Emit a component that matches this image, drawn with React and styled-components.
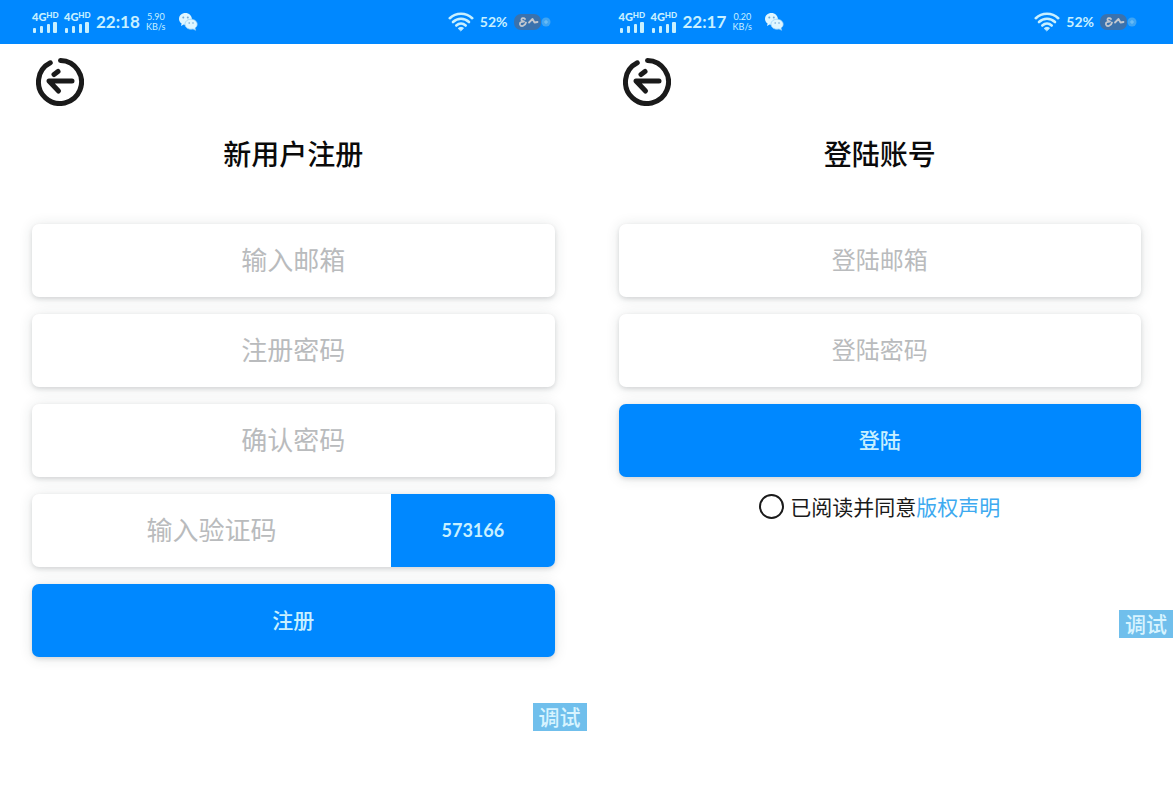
import React, { useState } from 'react'
import styled, { createGlobalStyle } from 'styled-components'

const colors = {
	blue: '#0088ff',
	ice: '#c8f0ff',
	ink: '#1a1a1a',
	placeholder: '#b9bbbd',
	link: '#3eaaf0',
	debug: '#70bfec',
	white: '#ffffff',
}

const cardShadow = '0 2px 4px rgba(30, 40, 50, 0.13), 0 1px 14px rgba(30, 50, 50, 0.12)'

const GlobalStyle = createGlobalStyle`
	* {
		box-sizing: border-box;
	}

	body {
		margin: 0;
		background: ${colors.white};
		color: ${colors.ink};
		font-family: Lato, 'Noto Sans CJK SC', sans-serif;
	}

	button,
	input {
		font-family: inherit;
	}
`

const Screens = styled.main`
	display: grid;
	grid-template-columns: 1fr 1fr;
	min-height: 100vh;
`

const Phone = styled.section`
	position: relative;
	min-width: 0;
`

const StatusBar = styled.header`
	display: flex;
	justify-content: space-between;
	align-items: center;
	height: 44px;
	padding: 0 36px 0 32px;
	background: ${colors.blue};
	color: ${colors.ice};
`

const StatusGroup = styled.div`
	display: flex;
	align-items: center;
	gap: 6px;
`

const Signal = styled.div`
	display: flex;
	flex-direction: column;
	gap: 1px;
	width: 26px;
`

const Network = styled.span`
	display: flex;
	font-size: 11px;
	font-weight: 900;
	line-height: 9px;
`

const Hd = styled.span`
	font-size: 8px;
	line-height: 7px;
`

const Time = styled.time`
	font-size: 17px;
	font-weight: 700;
	line-height: 22px;
`

const Speed = styled.span`
	width: 20px;
	margin-right: 6px;
	font-size: 9px;
	line-height: 10px;
	text-align: center;
`

const Percent = styled.span`
	font-size: 14px;
	font-weight: 700;
	line-height: 22px;
`

const Body = styled.div`
	padding: 14px 32px 0;
`

const BackButton = styled.button`
	display: block;
	margin-left: 4px;
	padding: 0;
	border: 0;
	background: none;
	cursor: pointer;

	svg {
		display: block;
	}
`

const Title = styled.h1`
	margin: 28px 0 50px;
	color: #0a0a0a;
	font-size: 28px;
	font-weight: 500;
	line-height: 40px;
	text-align: center;
`

const Form = styled.form`
	display: flex;
	flex-direction: column;
	gap: 17px;
`

const Field = styled.div`
	display: flex;
	height: 73px;
	overflow: hidden;
	border-radius: 7px;
	background: ${colors.white};
	box-shadow: ${cardShadow};
`

const Input = styled.input`
	flex: 11;
	min-width: 0;
	padding: 0 0 2px;
	border: 0;
	outline: 0;
	background: transparent;
	font-size: ${({ $compact }) => ($compact ? 24 : 26)}px;
	text-align: center;

	&::placeholder {
		color: ${colors.placeholder};
		opacity: 1;
	}
`

const CodeButton = styled.button`
	flex: 5;
	padding: 0 0 2px;
	border: 0;
	background: ${colors.blue};
	color: ${colors.ice};
	font-size: 18px;
	font-weight: 700;
`

const Submit = styled.button`
	height: 73px;
	padding: 0 0 4px;
	border: 0;
	border-radius: 7px;
	background: ${colors.blue};
	box-shadow: ${cardShadow};
	color: ${colors.ice};
	font-size: 21px;
	font-weight: 500;
`

const Agreement = styled.div`
	display: flex;
	justify-content: center;
	align-items: center;
	font-size: 21px;
	line-height: 24px;
`

const AgreeBox = styled.input`
	appearance: none;
	width: 25px;
	height: 25px;
	margin: 0 6px 0 0;
	border: 2px solid ${colors.ink};
	border-radius: 50%;

	&:checked {
		background: ${colors.blue};
	}
`

const Link = styled.a`
	color: ${colors.link};
	text-decoration: none;
`

const DebugTag = styled.button`
	position: absolute;
	top: ${({ $top }) => $top}px;
	right: 0;
	height: 28px;
	padding: 0 6px;
	border: 0;
	background: ${colors.debug};
	color: #d8f4ff;
	font-size: 21px;
	font-weight: 500;
	line-height: 28px;
`

const SignalMeter = () => (
	<Signal>
		<Network>
			4G<Hd>HD</Hd>
		</Network>
		<svg width='26' height='11' viewBox='0 0 26 11' fill='currentColor' aria-hidden='true'>
			<rect x='1' y='6' width='3' height='5' rx='1' />
			<rect x='8' y='4' width='3' height='7' rx='1' />
			<rect x='15' y='2' width='3' height='9' rx='1' />
			<rect x='21' y='0' width='4' height='11' rx='1' />
		</svg>
	</Signal>
)

const WeChatIcon = () => (
	<svg width='20' height='20' viewBox='0 0 20 20' aria-hidden='true'>
		<path d='M7.5 1C3.7 1 1 3.6 1 6.9c0 1.9 1 3.5 2.6 4.6L3 14l2.7-1.4c.8.2 1.7.2 2.6.1L14 7.4C13.8 3.7 11 1 7.5 1z' fill='#dff6ff' />
		<path d='M13 7.2c-3.4 0-6 2.2-6 5s2.6 5 6 5c.7 0 1.4-.1 2-.3l2.600 1.400-.6-2.200c1.400-1 2.200-2.300 2.200-3.900 0-2.800-2.800-5-6.200-5z' fill='#dff6ff' stroke='#8fcdf6' strokeWidth='.7' />
		<g fill='#6fa9d8'>
			<circle cx='5.3' cy='5.5' r='1' />
			<circle cx='9.8' cy='5.5' r='1' />
			<circle cx='11.2' cy='11' r='.8' />
			<circle cx='15' cy='11' r='.8' />
		</g>
	</svg>
)

const WifiIcon = () => (
	<svg width='26' height='20' viewBox='0 0 26 20' fill='none' stroke='currentColor' strokeWidth='2.6' strokeLinecap='round' aria-hidden='true'>
		<path d='M1.8 6.2C8 .3 18 .3 24.2 6.2' />
		<path d='M5 10c4.5-4.300 11.5-4.300 16 0' />
		<path d='M8.3 13.500c2.8-2.500 6.600-2.500 9.400 0' />
		<path d='M10.500 16.200c1.500-1.200 3.500-1.200 5 0L13 18.600z' fill='currentColor' strokeWidth='1' />
	</svg>
)

const BatteryIcon = () => (
	<svg width='37' height='16' viewBox='0 0 37 16' fill='none' aria-hidden='true'>
		<rect x='0' y='0' width='27' height='16' rx='7' fill='#3a72ad' />
		<g stroke='#c5c9cf' strokeWidth='1.8' strokeLinecap='round' strokeLinejoin='round'>
			<path d='M11 5c-1-1.500-4-1-3.500 1 .2 1 1.500 1.500 2.500 1.500-3 0-4.500 1-4 3 .8 2.500 5 2 6-2' />
			<path d='M15 8.500l3.500-3.500 2 3.500 3-.5' />
		</g>
		<circle cx='32' cy='8' r='4.5' fill='#3fa5f4' />
		<path d='M30 8h4M32 6v4' stroke='#79c3f5' />
	</svg>
)

const BackIcon = () => (
	<svg width='48' height='48' viewBox='0 0 48 48' fill='none' stroke={colors.ink} strokeWidth='5' strokeLinecap='round' strokeLinejoin='round' aria-hidden='true'>
		<path d='M24.5 2.5A21.5 21.5 0 1 1 14.3 4.8' />
		<path d='M36 23H13l9.500 10' />
		<path d='M18 16.500l4-3' />
	</svg>
)

const PhoneScreen = ({ time, speed, title, debugTop, children }) => (
	<Phone>
		<StatusBar>
			<StatusGroup>
				<SignalMeter />
				<SignalMeter />
				<Time>{time}</Time>
				<Speed>
					{speed}
					<br />
					KB/s
				</Speed>
				<WeChatIcon />
			</StatusGroup>
			<StatusGroup>
				<WifiIcon />
				<Percent>52%</Percent>
				<BatteryIcon />
			</StatusGroup>
		</StatusBar>
		<Body>
			<BackButton type='button' aria-label='返回'>
				<BackIcon />
			</BackButton>
			<Title>{title}</Title>
			<Form onSubmit={(e) => e.preventDefault()}>{children}</Form>
		</Body>
		<DebugTag type='button' $top={debugTop}>
			调试
		</DebugTag>
	</Phone>
)

const TextField = ({ label, type = 'text', compact, children }) => (
	<Field>
		<Input type={type} placeholder={label} aria-label={label} $compact={compact} />
		{children}
	</Field>
)

const App = () => {
	const [agreed, setAgreed] = useState(false)

	return (
		<>
			<GlobalStyle />
			<Screens>
				<PhoneScreen time='22:18' speed='5.90' title='新用户注册' debugTop={703}>
					<TextField label='输入邮箱' type='email' />
					<TextField label='注册密码' type='password' />
					<TextField label='确认密码' type='password' />
					<TextField label='输入验证码'>
						<CodeButton type='button'>573166</CodeButton>
					</TextField>
					<Submit type='submit'>注册</Submit>
				</PhoneScreen>
				<PhoneScreen time='22:17' speed='0.20' title='登陆账号' debugTop={610}>
					<TextField label='登陆邮箱' type='email' compact />
					<TextField label='登陆密码' type='password' compact />
					<Submit type='submit'>登陆</Submit>
					<Agreement>
						<AgreeBox
							id='agree'
							type='checkbox'
							checked={agreed}
							onChange={(e) => setAgreed(e.target.checked)}
						/>
						<label htmlFor='agree'>已阅读并同意</label>
						<Link href='#copyright'>版权声明</Link>
					</Agreement>
				</PhoneScreen>
			</Screens>
		</>
	)
}

export default App
